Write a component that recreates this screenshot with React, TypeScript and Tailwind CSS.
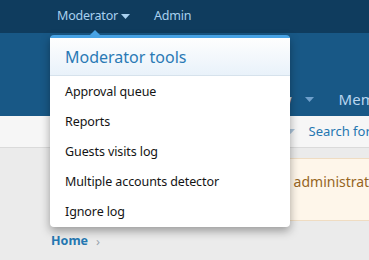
import React from "react";

const Caret = ({ className }: { className?: string }) => (
  <svg width="9" height="5" viewBox="0 0 9 5" className={className}>
    <path d="M0 0 L9 0 L4.5 5 Z" fill="currentColor" />
  </svg>
);

export default function App() {
  const items = [
    "Approval queue",
    "Reports",
    "Guests visits log",
    "Multiple accounts detector",
    "Ignore log",
  ];
  return (
    <div
      className="relative w-[369px] h-[260px] overflow-hidden bg-[#ebebeb]"
      style={{ fontFamily: '"Noto Sans", "Open Sans", sans-serif' }}
    >
      {/* staff bar */}
      <div className="h-[33px] bg-[#0f3c5e] flex items-center pl-[57px] text-[12.5px] tracking-[-0.2px] text-[#a8d0ef] whitespace-nowrap">
        <span>Moderator</span>
        <Caret className="ml-[3px] shrink-0 text-[#a8d0ef]" />
        <span className="ml-[24px]">Admin</span>
      </div>
      {/* header band */}
      <div className="h-[83px] bg-[#185886] flex flex-col justify-end">
        <div className="h-[33px] flex items-center pl-[211px] whitespace-nowrap text-[15px] text-[#dfeaf5]">
          <span className="shrink-0">What's new</span>
          <Caret className="ml-[13px] shrink-0 text-[#6fa0cc]" />
          <span className="ml-[25px] shrink-0 text-[#b9d6f0]">Members</span>
        </div>
      </div>
      {/* section links */}
      <div className="h-[32px] bg-[#f6f6f6] border-b border-[#dadada] flex items-center pl-[217px] whitespace-nowrap text-[13px] text-[#2577b1]">
        <span className="shrink-0">New posts</span>
        <Caret className="ml-[5px] shrink-0 text-[#aac3d8]" />
        <span className="ml-[14px] shrink-0">Search forums</span>
      </div>
      {/* notice */}
      <div className="mt-[10px] ml-[120px] h-[63px] bg-[#fef6ea] border-y border-[#efdcc2] flex items-start pt-[12px] pl-[17px] whitespace-nowrap text-[14px] text-[#96651f]">
        <span className="shrink-0">You are logged in as an administrator</span>
      </div>
      {/* breadcrumb */}
      <div className="pl-[51px] pt-[11px] flex items-center gap-[8px]">
        <span className="text-[12.5px] font-bold text-[#2577b1]">Home</span>
        <span className="text-[13px] text-[#9aa5ae]">›</span>
      </div>

      {/* dropdown */}
      <div className="absolute left-[50px] top-[35px] w-[240px] rounded-[4px] bg-white shadow-[0_4px_10px_rgba(0,0,0,0.35)] border-t-[3px] border-[#47a2e4]">
        <div className="absolute left-[40px] -top-[8px] w-0 h-0 border-l-[5px] border-r-[5px] border-b-[5px] border-l-transparent border-r-transparent border-b-[#47a2e4]" />
        <div className="h-[38px] flex items-center pl-[15px] bg-gradient-to-b from-[#fefefe] to-[#e9f2fa] border-b border-[#d6e2ec] text-[16px] text-[#2a7ab5]">
          Moderator tools
        </div>
        <div className="flex flex-col pt-[1px]">
          {items.map((t) => (
            <div key={t} className="h-[30px] flex items-center pl-[15px] text-[12.5px] tracking-[-0.1px] text-[#141414] whitespace-nowrap">
              {t}
            </div>
          ))}
        </div>
      </div>
    </div>
  );
}
